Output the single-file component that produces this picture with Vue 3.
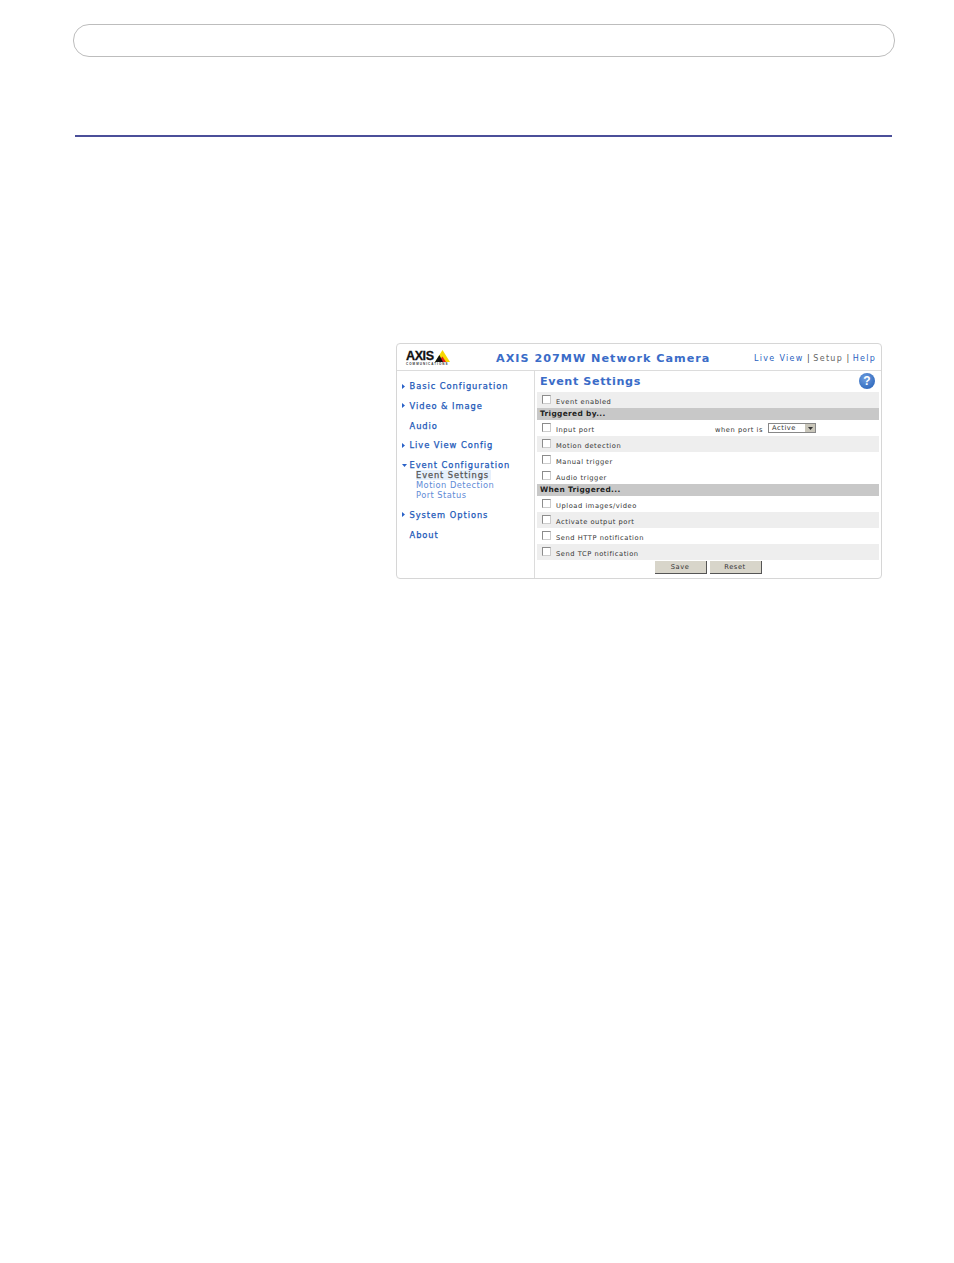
<script setup>
const nav = [
  { label: 'Basic Configuration', arrow: 'right' },
  { label: 'Video & Image', arrow: 'right' },
  { label: 'Audio' },
  { label: 'Live View Config', arrow: 'right' },
  { label: 'Event Configuration', arrow: 'down', subs: ['Event Settings', 'Motion Detection', 'Port Status'] },
  { label: 'System Options', arrow: 'right' },
  { label: 'About' },
]
const top = [{ label: 'Event enabled', grey: true }]
const triggers = [
  { label: 'Input port', port: true },
  { label: 'Motion detection', grey: true },
  { label: 'Manual trigger' },
  { label: 'Audio trigger' },
]
const actions = [
  { label: 'Upload images/video' },
  { label: 'Activate output port', grey: true },
  { label: 'Send HTTP notification' },
  { label: 'Send TCP notification', grey: true },
]
</script>

<template>
  <div class="page">
    <div class="pill"></div>
    <div class="rule"></div>
    <div class="shot-wrap">
      <section class="shot">
        <header class="head">
          <div class="logo">
            <div class="logo-top">
              <span class="logo-word">AXIS</span>
              <svg class="logo-tri" width="15" height="12" viewBox="0 0 15 12">
                <path d="M7.5 0 L15 12 H0 Z" fill="#f7d800" />
                <path d="M7.5 6.5 L11 12 H3 Z" fill="#e0201c" />
                <path d="M4.4 5 L8 12 H0 Z" fill="#111" />
              </svg>
            </div>
            <div class="logo-tag">COMMUNICATIONS</div>
          </div>
          <h1 class="title">AXIS 207MW Network Camera</h1>
          <nav class="links">
            <a class="link">Live View</a>
            <span class="sep">|</span>
            <a class="link setup">Setup</a>
            <span class="sep">|</span>
            <a class="link">Help</a>
          </nav>
        </header>
        <div class="body">
          <aside class="side">
            <div v-for="n in nav" :key="n.label" class="nav-group">
              <div class="nav-item">
                <span class="arrow-box">
                  <svg v-if="n.arrow === 'right'" width="3" height="5" viewBox="0 0 3 5"><path d="M0 0 L3 2.5 L0 5 Z" fill="#2a62c8" /></svg>
                  <svg v-if="n.arrow === 'down'" width="5" height="3" viewBox="0 0 5 3"><path d="M0 0 H5 L2.5 3 Z" fill="#2a62c8" /></svg>
                </span>
                <span>{{ n.label }}</span>
              </div>
              <div v-for="(s, i) in n.subs" :key="s" class="sub" :class="{ current: i === 0 }">{{ s }}</div>
            </div>
          </aside>
          <main class="main">
            <div class="main-title">
              <h2>Event Settings</h2>
              <span class="help">?</span>
            </div>
            <div v-for="r in top" :key="r.label" class="row" :class="{ grey: r.grey }">
              <span class="check"></span><span class="lbl">{{ r.label }}</span>
            </div>
            <div class="band">Triggered by...</div>
            <div v-for="r in triggers" :key="r.label" class="row" :class="{ grey: r.grey }">
              <span class="check"></span><span class="lbl">{{ r.label }}</span>
              <div v-if="r.port" class="port">
                <span class="lbl">when port is</span>
                <span class="select"><span class="sel-text">Active</span><span class="sel-btn"><svg width="5" height="3" viewBox="0 0 5 3"><path d="M0 0 H5 L2.5 3 Z" fill="#333" /></svg></span></span>
              </div>
            </div>
            <div class="band">When Triggered...</div>
            <div v-for="r in actions" :key="r.label" class="row" :class="{ grey: r.grey }">
              <span class="check"></span><span class="lbl">{{ r.label }}</span>
            </div>
            <div class="buttons">
              <button class="btn">Save</button>
              <button class="btn">Reset</button>
            </div>
          </main>
        </div>
      </section>
    </div>
  </div>
</template>

<style>
html, body { margin: 0; background: #fff; }
</style>

<style scoped>
.page {
  width: 954px;
  height: 1263px;
  box-sizing: border-box;
  padding: 24px 0 0 73px;
  font-family: "DejaVu Sans", Verdana, sans-serif;
  overflow: hidden;
}
.pill {
  width: 822px;
  height: 33px;
  box-sizing: border-box;
  border: 1px solid #bdbdbd;
  border-radius: 16px;
}
.rule {
  width: 817px;
  height: 2px;
  margin: 78px 0 0 2px;
  background: #4b4f99;
}
.shot-wrap { padding: 206px 0 0 323px; }
.shot {
  width: 486px;
  height: 236px;
  box-sizing: border-box;
  border: 1px solid #d6d6d6;
  border-radius: 4px;
  display: flex;
  flex-direction: column;
}
.head {
  height: 24px;
  padding-top: 2px;
  flex: none;
  display: flex;
  align-items: center;
  border-bottom: 1px solid #dcdcdc;
}
.logo { width: 99px; padding-left: 9px; box-sizing: border-box; flex: none; margin-top: -1px; }
.logo-top { display: flex; align-items: flex-end; height: 12px; }
.logo-word {
  font: bold 12.5px/12px "Liberation Sans", sans-serif;
  letter-spacing: -0.4px;
  color: #111;
  width: 29px;
  -webkit-text-stroke: 0.3px #111;
}
.logo-tri { flex: none; }
.logo-tag {
  font: bold 3px/3px "Liberation Sans", sans-serif;
  letter-spacing: 1.05px;
  color: #333;
  margin-top: 1px;
  white-space: nowrap;
}
.title {
  margin: 0;
  flex: none;
  width: 258px;
  font-size: 11.2px;
  font-weight: 700;
  color: #3a6cc8;
  white-space: nowrap;
  letter-spacing: 1px;
}
.links {
  display: flex;
  align-items: center;
  gap: 3.5px;
  font-size: 8px;
  white-space: nowrap;
  letter-spacing: 1.3px;
}
.link { color: #2a5fc0; }
.link.setup { color: #666; }
.sep { color: #444; letter-spacing: 0; }
.body { flex: 1; display: flex; min-height: 0; }
.side {
  width: 138px;
  flex: none;
  box-sizing: border-box;
  border-right: 1px solid #dcdcdc;
  padding-top: 10px;
}
.nav-group { margin-bottom: 9.8px; }
.nav-item {
  display: flex;
  align-items: center;
  height: 10px;
  font-size: 8.3px;
  color: #2158b8;
  white-space: nowrap;
  letter-spacing: 0.95px;
  -webkit-text-stroke: 0.25px #2158b8;
}
.arrow-box {
  width: 12.5px;
  padding-left: 5px;
  box-sizing: border-box;
  flex: none;
  display: flex;
  align-items: center;
}
.sub {
  height: 10px;
  line-height: 10px;
  padding-left: 19px;
  font-size: 8.3px;
  color: #5f8bd6;
  white-space: nowrap;
  letter-spacing: 0.45px;
}
.sub.current {
  color: #555;
  letter-spacing: 0.9px;
  background: linear-gradient(#e6f0fc, #e6f0fc) 19px 0 / 75px 10px no-repeat;
  -webkit-text-stroke: 0.25px #555;
}
.main { flex: 1; min-width: 0; padding-left: 2px; }
.main-title {
  height: 21px;
  display: flex;
  align-items: center;
  justify-content: space-between;
  box-sizing: border-box;
  padding: 0 4px 0 3px;
  width: 342px;
}
.main-title h2 {
  margin: 0;
  font-size: 11.2px;
  font-weight: 700;
  color: #3a6cc8;
  letter-spacing: 0.6px;
}
.help {
  width: 16px;
  height: 16px;
  margin-top: -1px;
  border-radius: 50%;
  background: radial-gradient(circle at 40% 35%, #6f9ee0, #1f5cb4);
  color: #fff;
  font: bold 12px/16px "Liberation Sans", sans-serif;
  text-align: center;
}
.row {
  width: 342px;
  height: 16px;
  display: flex;
  align-items: center;
}
.row.grey { background: #eeeeee; }
.check {
  width: 9px;
  height: 9px;
  box-sizing: border-box;
  border: 1px solid #8c8c8c;
  border-right-color: #ccc;
  border-bottom-color: #ccc;
  background: #fff;
  margin: -1px 0 0 5px;
  flex: none;
}
.lbl {
  font-size: 6.7px;
  color: #333;
  margin-left: 5px;
  white-space: nowrap;
  letter-spacing: 0.55px;
  padding-top: 3px;
}
.port {
  display: flex;
  align-items: center;
  margin-left: auto;
  margin-right: 64px;
}
.select {
  display: flex;
  align-items: center;
  justify-content: space-between;
  width: 48px;
  height: 10px;
  box-sizing: border-box;
  margin-left: 5px;
  border: 1px solid #888;
  background: #fff;
  margin-right: -1px;
}
.sel-text { font-size: 6.7px; color: #333; padding-left: 3px; letter-spacing: 0.55px; }
.sel-btn {
  width: 10px;
  height: 8px;
  background: #c9c6ba;
  display: flex;
  align-items: center;
  justify-content: center;
}
.band {
  width: 342px;
  height: 12px;
  line-height: 12px;
  background: #c8c8c8;
  padding-left: 3px;
  box-sizing: border-box;
  font-size: 7.4px;
  font-weight: 700;
  color: #222;
  letter-spacing: 0.35px;
}
.buttons {
  width: 342px;
  display: flex;
  justify-content: center;
  gap: 3px;
  padding-top: 1px;
}
.btn {
  width: 51px;
  height: 12px;
  padding: 0;
  border: 0;
  border-right: 1px solid #555;
  border-bottom: 1px solid #555;
  background: #d8d5ca;
  font-family: inherit;
  font-size: 6.7px;
  letter-spacing: 0.55px;
  color: #333;
  box-sizing: content-box;
}
</style>
